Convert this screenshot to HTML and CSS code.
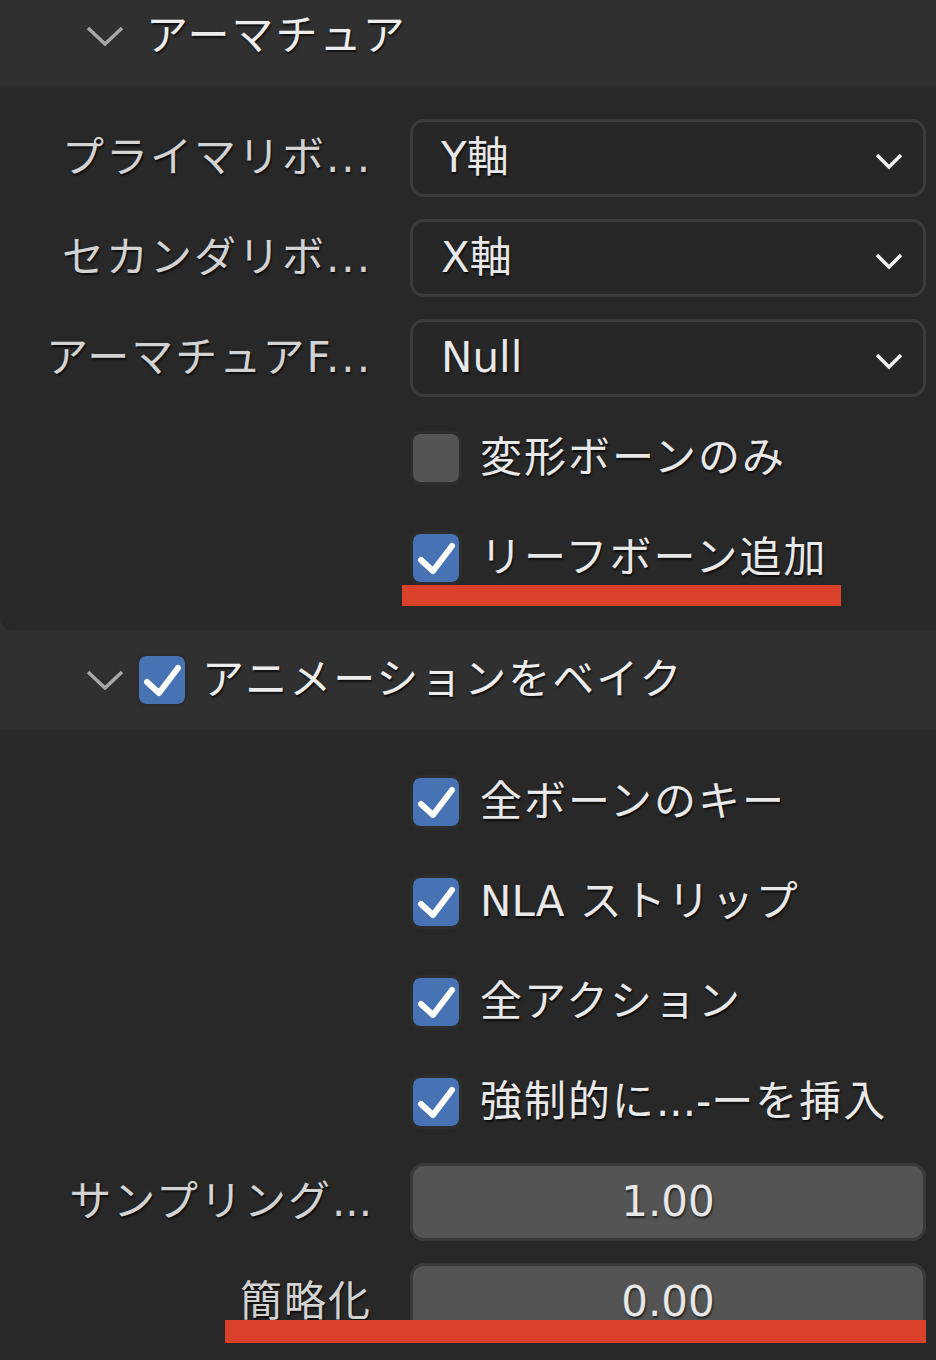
FILE: index.html
```html
<!DOCTYPE html>
<html lang="ja">
<head>
    <meta charset="UTF-8">
    <title>アーマチュア</title>
    <link rel="stylesheet" href="styles.css">
</head>
<body>
    <div class="panel-header first">
        <svg class="chevron" width="38" height="20" viewBox="0 0 38 20"><polyline points="2,2 19,18 36,2"/></svg>
        <span class="header-text">アーマチュア</span>
    </div>
    <div class="panel-body rounded">
        <div class="row">
            <div class="label">プライマリボ...</div>
            <div class="dropdown"><span>Y軸</span><svg width="28" height="18" viewBox="0 0 28 18"><polyline points="2,3 14,15 26,3"/></svg></div>
        </div>
        <div class="row">
            <div class="label">セカンダリボ...</div>
            <div class="dropdown"><span>X軸</span><svg width="28" height="18" viewBox="0 0 28 18"><polyline points="2,3 14,15 26,3"/></svg></div>
        </div>
        <div class="row">
            <div class="label">アーマチュアF...</div>
            <div class="dropdown"><span>Null</span><svg width="28" height="18" viewBox="0 0 28 18"><polyline points="2,3 14,15 26,3"/></svg></div>
        </div>
        <div class="row">
            <div class="label"></div>
            <div class="check-row"><span class="checkbox"></span><span class="check-text">変形ボーンのみ</span></div>
        </div>
        <div class="row">
            <div class="label"></div>
            <div class="check-row"><span class="checkbox on"><svg viewBox="0 0 46 48"><polyline points="8,26 20,37 39,12"/></svg></span><span class="check-text">リーフボーン追加</span></div>
        </div>
        <div class="mark mark-leaf"></div>
    </div>

    <div class="panel-header">
        <svg class="chevron" width="38" height="20" viewBox="0 0 38 20"><polyline points="2,2 19,18 36,2"/></svg>
        <span class="checkbox on head-check"><svg viewBox="0 0 46 48"><polyline points="8,26 20,37 39,12"/></svg></span>
        <span class="header-text">アニメーションをベイク</span>
    </div>
    <div class="panel-body">
        <div class="row">
            <div class="label"></div>
            <div class="check-row"><span class="checkbox on"><svg viewBox="0 0 46 48"><polyline points="8,26 20,37 39,12"/></svg></span><span class="check-text">全ボーンのキー</span></div>
        </div>
        <div class="row">
            <div class="label"></div>
            <div class="check-row"><span class="checkbox on"><svg viewBox="0 0 46 48"><polyline points="8,26 20,37 39,12"/></svg></span><span class="check-text"><span class="latin">NLA</span> ストリップ</span></div>
        </div>
        <div class="row">
            <div class="label"></div>
            <div class="check-row"><span class="checkbox on"><svg viewBox="0 0 46 48"><polyline points="8,26 20,37 39,12"/></svg></span><span class="check-text">全アクション</span></div>
        </div>
        <div class="row">
            <div class="label"></div>
            <div class="check-row"><span class="checkbox on"><svg viewBox="0 0 46 48"><polyline points="8,26 20,37 39,12"/></svg></span><span class="check-text">強制的に<span class="latin">...-</span>ーを挿入</span></div>
        </div>
        <div class="row">
            <div class="label">サンプリング<span class="latin">...</span></div>
            <div class="number">1.00</div>
        </div>
        <div class="row">
            <div class="label">簡略化</div>
            <div class="number">0.00</div>
        </div>
        <div class="mark mark-simplify"></div>
    </div>
</body>
</html>
```

FILE: styles.css
```css
body {
    margin: 0;
    background-color: #303030;
    font-family: "DejaVu Sans", "Noto Sans CJK JP", sans-serif;
    font-size: 42px;
    letter-spacing: 2px;
    color: #e6e6e6;
    overflow: hidden;
}
.latin {
    letter-spacing: 0;
}
.panel-header {
    height: 100px;
    display: flex;
    align-items: center;
    padding-left: 86px;
    background-color: #303030;
}
.panel-header.first {
    margin-top: -14px;
}
.chevron {
    flex: none;
    fill: none;
    stroke: #a8a8a8;
    stroke-width: 3.5;
    margin-right: 22px;
}
.header-text {
    color: #ededed;
    line-height: 1;
    text-shadow: 1px 2px 2px rgba(0, 0, 0, 0.7);
}
.head-check {
    margin-left: -10px;
    margin-right: 14px;
}
.panel-body {
    position: relative;
    background-color: #282828;
    padding: 22px 10px 22px 0;
}
.panel-body.rounded {
    border-radius: 0 0 0 12px;
}
.row {
    height: 100px;
    display: grid;
    grid-template-columns: 372px 516px;
    column-gap: 38px;
    align-items: center;
}
.label {
    text-align: right;
    color: #d2d2d2;
    line-height: 1;
    white-space: nowrap;
    text-shadow: 1px 2px 2px rgba(0, 0, 0, 0.7);
}
.dropdown {
    height: 78px;
    box-sizing: border-box;
    border: 3px solid #3b3b3b;
    border-radius: 14px;
    background-color: #272727;
    display: flex;
    align-items: center;
    justify-content: space-between;
    padding: 0 20px 4px 28px;
    line-height: 1;
    letter-spacing: 0;
    color: #e8e8e8;
    text-shadow: 1px 2px 2px rgba(0, 0, 0, 0.7);
}
.dropdown span {
    margin-top: 4px;
}
.dropdown svg {
    margin-top: 10px;
    fill: none;
    stroke: #f0f0f0;
    stroke-width: 3.5;
}
.check-row {
    display: flex;
    align-items: center;
}
.checkbox {
    flex: none;
    width: 46px;
    height: 48px;
    border: 3px solid #2d2d2d;
    border-radius: 10px;
    background-color: #545454;
    background-clip: padding-box;
    display: flex;
}
.checkbox.on {
    background-color: #4772b3;
}
.checkbox svg {
    width: 46px;
    height: 48px;
    fill: none;
    stroke: #ffffff;
    stroke-width: 6;
    stroke-linecap: round;
    stroke-linejoin: round;
}
.check-text {
    margin-left: 18px;
    line-height: 1;
    white-space: nowrap;
    color: #e8e8e8;
    text-shadow: 1px 2px 2px rgba(0, 0, 0, 0.7);
}
.number {
    height: 78px;
    box-sizing: border-box;
    border: 3px solid #3a3a3a;
    border-radius: 14px;
    background-color: #545454;
    display: flex;
    align-items: center;
    justify-content: center;
    line-height: 1;
    letter-spacing: 0;
    color: #e6e6e6;
    text-shadow: 1px 2px 2px rgba(0, 0, 0, 0.6);
}
.mark {
    position: absolute;
    background-color: #da412b;
}
.mark-leaf {
    left: 402px;
    top: 499px;
    width: 439px;
    height: 21px;
}
.mark-simplify {
    left: 225px;
    top: 590px;
    width: 701px;
    height: 23px;
}
```
